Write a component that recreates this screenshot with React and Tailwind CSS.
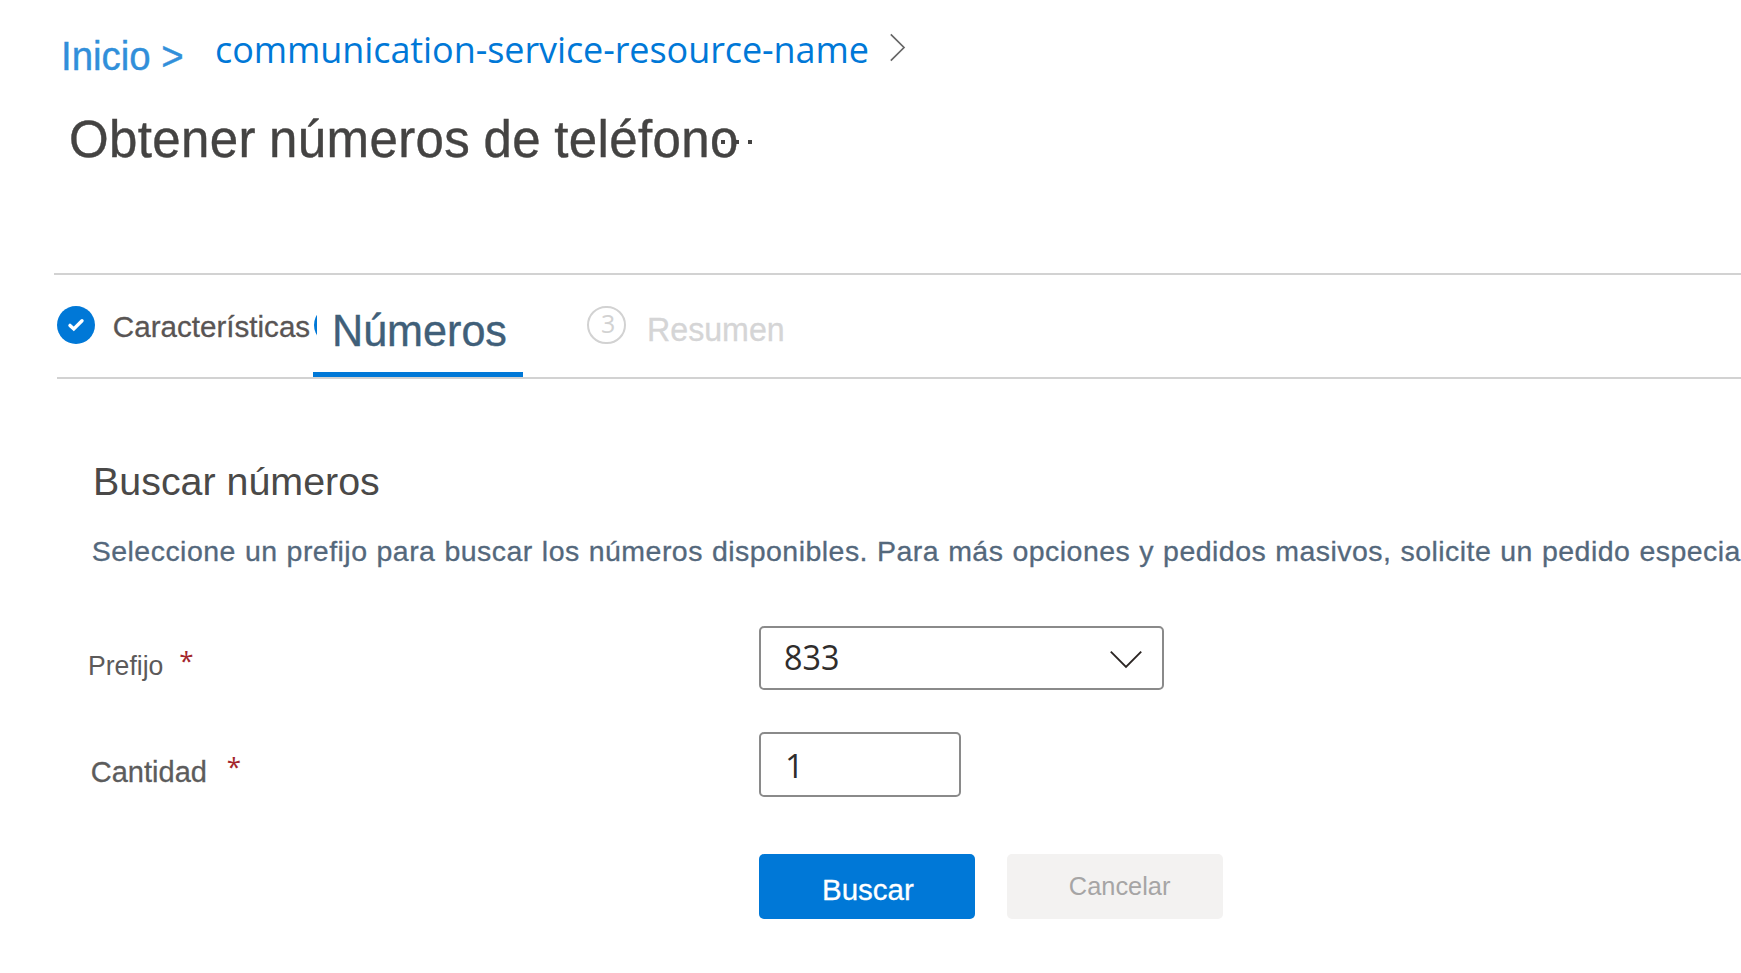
function Breadcrumb() {
  return (
    <nav className="flex h-[100px] items-start">
      <a className="ml-[61px] mt-[34px] w-[154px] origin-left scale-x-[0.96] whitespace-pre text-[40px] leading-[44px] text-[#318fda] [-webkit-text-stroke:0.4px]">
        Inicio &gt;
      </a>
      <a className="mt-[25px] w-[675px] whitespace-nowrap font-['Open_Sans',sans-serif] text-[36px] leading-[49px] tracking-[-0.08px] text-[#0078d7]">
        communication-service-resource-name
      </a>
      <svg className="mt-[33px] h-[30px] w-[18px]" viewBox="0 0 18 30" fill="none" stroke="#666" strokeWidth="1.7">
        <path d="M0.8 1.4 L14 14.5 L0.8 27.7" />
      </svg>
    </nav>
  );
}

function Title() {
  return (
    <header className="relative h-[173px] pl-[68.9px] pt-[11px]">
      <h1 className="whitespace-nowrap text-[51px] leading-[57px] tracking-[0.38px] text-[#444342] [-webkit-text-stroke:0.4px] [word-spacing:-1.3px]">
        Obtener números de teléfono
      </h1>
      <div className="absolute left-[721px] top-[40px] flex gap-[9.5px]">
        <span className="size-[4px] bg-[#444342]" />
        <span className="size-[4px] bg-[#444342]" />
        <span className="size-[4px] bg-[#444342]" />
      </div>
    </header>
  );
}

function Steps() {
  return (
    <div>
      <div className="ml-[54px] h-[2px] bg-[#d2d2d2]" />
      <div className="flex h-[102px] items-start pl-[57px]">
        <div className="flex w-[256px] items-start">
          <svg className="mt-[31px] size-[38px] shrink-0" viewBox="0 0 38 38">
            <circle cx="19" cy="19" r="19" fill="#0078d7" />
            <path
              d="M13 19.4 L16.8 23 L25 14.8"
              fill="none"
              stroke="#fff"
              strokeWidth="3.4"
              strokeLinecap="round"
            />
          </svg>
          <span className="ml-[17.8px] mt-[35px] whitespace-nowrap text-[29.6px] leading-[33px] text-[#595554] [-webkit-text-stroke:0.3px]">
            Características
          </span>
        </div>
        <div className="flex h-[102px] w-[210px] shrink-0 items-start border-b-[5px] border-[#0078d7]">
          <div className="ml-px mt-[31px] h-[38px] w-[3px] shrink-0 overflow-hidden">
            <div className="size-[38px] rounded-full bg-[#0078d7]" />
          </div>
          <span className="ml-[15.2px] mt-[31px] origin-left scale-x-[0.98] whitespace-nowrap text-[44px] leading-[49px] text-[#405f79] [-webkit-text-stroke:0.4px]">
            Números
          </span>
        </div>
        <div className="ml-[64px] mt-[31px] flex h-[38px] w-[39px] shrink-0 rounded-full border-2 border-[#d2d2d2]">
          <span className="-mt-[2px] ml-[12px] font-['Open_Sans',sans-serif] text-[25px] leading-[34px] text-[#d2d2d2]">
            3
          </span>
        </div>
        <span className="ml-[21px] mt-[36px] origin-left scale-x-[0.975] text-[33px] leading-[37px] text-[#d5d5d6] [-webkit-text-stroke:0.3px]">
          Resumen
        </span>
      </div>
      <div className="ml-[57px] h-[2px] bg-[#d2d2d2]" />
    </div>
  );
}

function Star() {
  return (
    <span className="mt-[16px] font-['Open_Sans',sans-serif] text-[26px] leading-[36px] text-[#a4262c]">*</span>
  );
}

export default function App() {
  return (
    <div className="h-[973px] w-[1741px] overflow-hidden bg-white font-['Liberation_Sans',Arial,sans-serif]">
      <Breadcrumb />
      <Title />
      <Steps />
      <main className="pt-[80px]">
        <h2 className="ml-[93px] whitespace-nowrap text-[39.4px] leading-[44px] text-[#4a4948]">Buscar números</h2>
        <p className="ml-[91.8px] mt-[32px] whitespace-nowrap text-[28.5px] leading-[32px] tracking-[0.46px] [word-spacing:0.7px] text-[#54687c] [-webkit-text-stroke:0.3px]">
          Seleccione un prefijo para buscar los números disponibles. Para más opciones y pedidos masivos, solicite un
          pedido especia
        </p>
        <div className="mt-[59px] flex h-[106px] items-start">
          <div className="flex w-[759px] items-start pl-[87.6px]">
            <label className="mt-[24px] w-[91.7px] origin-left scale-x-[0.95] text-[28px] leading-[31px] text-[#5c5a5a]">
              Prefijo
            </label>
            <Star />
          </div>
          <div className="flex h-[64px] w-[405px] items-start rounded-[5px] border-2 border-[#8a8a8a]">
            <span className="ml-[22.5px] mt-[6px] origin-left scale-x-[0.95] font-['Open_Sans',sans-serif] text-[34px] leading-[46px] text-[#2f2d2c]">
              833
            </span>
            <svg
              className="ml-auto mr-[20px] mt-[22px] h-[20px] w-[32px]"
              viewBox="0 0 32 20"
              fill="none"
              stroke="#2b2523"
              strokeWidth="1.9"
            >
              <path d="M0.8 1.6 L16 16.8 L31.2 1.6" />
            </svg>
          </div>
        </div>
        <div className="flex h-[122px] items-start">
          <div className="flex w-[759px] items-start pl-[90.8px]">
            <label className="mt-[24px] w-[136px] text-[29px] leading-[32px] text-[#5c5c5c] [-webkit-text-stroke:0.3px]">
              Cantidad
            </label>
            <Star />
          </div>
          <div className="h-[65px] w-[202px] rounded-[5px] border-2 border-[#8a8a8a] pl-[24px] pt-[9px] font-['Open_Sans',sans-serif] text-[33px] leading-[45px] text-[#2f2d2c]">
            1
          </div>
        </div>
        <div className="ml-[759px] flex gap-[32px]">
          <button className="flex h-[65px] w-[216px] items-start rounded-[5px] bg-[#0078d7] pl-[63px] pt-[19px] text-[29.5px] leading-[33px] text-white [-webkit-text-stroke:0.3px]">
            Buscar
          </button>
          <button className="flex h-[65px] w-[216px] items-start rounded-[5px] bg-[#f3f2f1] pl-[61.8px] pt-[18px] text-[25.4px] leading-[28px] text-[#a6a5a5]">
            Cancelar
          </button>
        </div>
      </main>
    </div>
  );
}
